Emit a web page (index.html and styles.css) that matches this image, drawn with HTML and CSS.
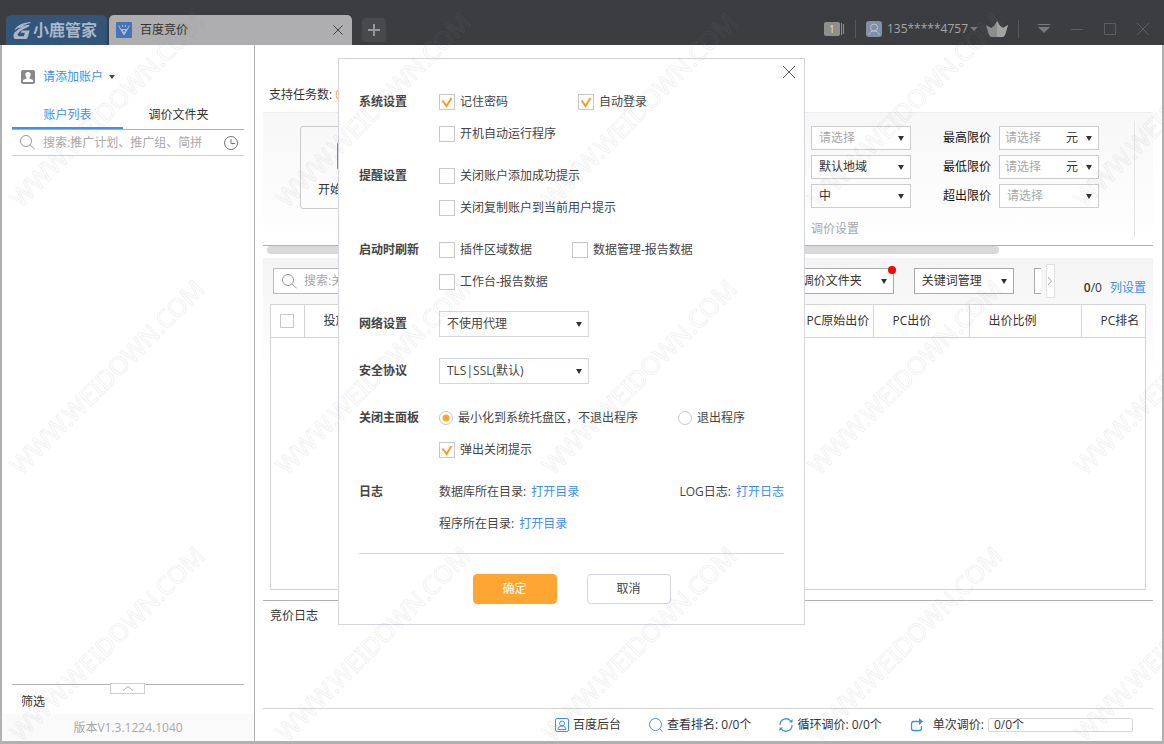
FILE: index.html
```html
<!DOCTYPE html>
<html lang="zh-CN">
<head>
<meta charset="utf-8">
<title>小鹿管家</title>
<link rel="stylesheet" href="styles.css">
</head>
<body>
<div class="app">
  <header class="titlebar">
    <div class="brand">
      <svg class="brand-mark" viewBox="0 0 18 18" aria-hidden="true"><path d="M18 0C9 1 3 4 1 9c2-2 5-3 8-3.500C4 8 0 11 0 15c0 2 1 3 3 3h9c2 0 3-1 3.500-3L17 9H9l-1.500 2.500H12L11 15H6c-2 0-2-2-1-3 2-3 6-5 11-7l1-2c-3 0-5 1-8 2 3-3 6-3 9-4z"/></svg>
      <span>小鹿管家</span>
    </div>
    <div class="tab">
      <svg class="tab-mark" viewBox="0 0 16 16" aria-hidden="true"><rect width="16" height="16" rx="1" fill="#4673b5"/><path d="M2.500 3.500l5.500 9.500 5.500-9.500M5 7.500h6M6 7.500l2 4M10 7.500l-2 4M6.500 3v2M9.500 3v2" fill="none" stroke="#b5c2d5"/></svg>
      <span class="tab-name">百度竞价</span>
      <button class="icon-button" aria-label="关闭标签"><svg width="10" height="10" viewBox="0 0 10 10"><path d="M0.500 0.500l9 9M9.500 0.500l-9 9" fill="none" stroke="#444"/></svg></button>
    </div>
    <button class="add-tab" aria-label="新标签"><svg width="12" height="12" viewBox="0 0 12 12"><path d="M6 0v12M0 6h12" stroke="#96979a" stroke-width="2"/></svg></button>
    <div class="window-tools">
      <svg class="badge-card" width="20" height="14" viewBox="0 0 20 14" aria-label="1"><rect width="16" height="14" rx="2" fill="#8f8f8d"/><path d="M17.500 1v12M19.500 2v10" stroke="#8f8f8d"/><text x="5" y="11" class="badge-number">1</text></svg>
      <i class="bar"></i>
      <svg class="user-mark" width="16" height="16" viewBox="0 0 16 16" aria-hidden="true"><rect width="16" height="16" rx="3" fill="#8190a8"/><g fill="none" stroke="#b9c0cb"><circle cx="8" cy="6.500" r="3.500"/><path d="M2.500 14c1-3 3-4 5.500-4s4.500 1 5.500 4"/></g></svg>
      <button class="user-name">135*****4757<svg width="8" height="4" viewBox="0 0 8 4"><path d="M0 0h8l-4 4z" fill="#77787a"/></svg></button>
      <svg class="crown" width="22" height="16" viewBox="0 0 22 16" aria-hidden="true"><path d="M0 4l5 3 3-2 3-5 3 5 3 2 5-3-3 10-2 2H5l-2-2z" fill="#8d8d8d"/><path d="M11 0l3 5 3 2 5-3-3 10-2 2h-6z" fill="#a3a3a3"/></svg>
      <i class="bar"></i>
      <button class="icon-button menu" aria-label="菜单"><svg width="12" height="10" viewBox="0 0 12 10"><path d="M0 0.500h12" stroke="#77787a"/><path d="M0 3h12l-6 6z" fill="#77787a"/></svg></button>
      <button class="icon-button" aria-label="最小化"><svg width="12" height="12" viewBox="0 0 12 12"><path d="M0 6.500h12" stroke="#5d5e61"/></svg></button>
      <button class="icon-button" aria-label="最大化"><svg width="12" height="12" viewBox="0 0 12 12"><path d="M0.500 0.500h11v11h-11z" fill="none" stroke="#5d5e61"/></svg></button>
      <button class="icon-button" aria-label="关闭"><svg width="12" height="12" viewBox="0 0 12 12"><path d="M0 0l12 12M12 0L0 12" stroke="#5d5e61"/></svg></button>
    </div>
  </header>

  <div class="workspace">
    <aside class="sidebar">
      <button class="account">
        <svg width="14" height="14" viewBox="0 0 14 14" aria-hidden="true"><rect width="14" height="14" rx="2" fill="#8a8a8a"/><path d="M7 2c2 0 3 1.500 2.500 3.500L8.500 7.500v1L12 10v2H2v-2l3.500-1.500v-1l-1-2C4 3.500 5 2 7 2z" fill="#fff"/></svg>
        <span>请添加账户</span>
        <i class="caret"></i>
      </button>
      <nav class="side-tabs">
        <button class="side-tab active">账户列表</button>
        <button class="side-tab">调价文件夹</button>
      </nav>
      <div class="side-search">
        <svg width="15" height="15" viewBox="0 0 15 15" aria-hidden="true"><g fill="none" stroke="#999"><circle cx="6" cy="6" r="5.500"/><path d="M10 10l4.500 4"/></g></svg>
        <input type="text" aria-label="搜索账户" placeholder="搜索:推广计划、推广组、简拼">
        <svg width="14" height="14" viewBox="0 0 14 14" aria-hidden="true"><g fill="none" stroke="#777"><circle cx="7" cy="7" r="6.500"/><path d="M7 3v4.500h4"/></g></svg>
      </div>
      <div class="side-list"></div>
      <div class="filter">
        <button class="collapse" aria-label="展开筛选"><svg width="10" height="5" viewBox="0 0 10 5"><path d="M0 4.500l5-4 5 4" fill="none" stroke="#aaa"/></svg></button>
        <span>筛选</span>
      </div>
      <div class="version">版本V1.3.1224.1040</div>
    </aside>

    <main class="content">
      <p class="tasks">支持任务数: <span class="count">0</span></p>
      <section class="toolbar">
        <button class="start"><svg width="22" height="26" viewBox="0 0 22 26" aria-hidden="true"><path d="M0 0l22 13L0 26z" fill="#3fc116"/></svg><span>开始竞价</span></button>
        <div class="price-group">
          <div class="price-fields">
            <select class="box muted" aria-label="设备"><option>请选择</option></select>
            <label for="max">最高限价</label>
            <div class="box unit"><input id="max" type="text" placeholder="请选择"><select aria-label="最高限价单位"><option>元</option></select></div>
            <select class="box" aria-label="地域"><option>默认地域</option></select>
            <label for="min">最低限价</label>
            <div class="box unit"><input id="min" type="text" placeholder="请选择"><select aria-label="最低限价单位"><option>元</option></select></div>
            <select class="box" aria-label="速度"><option>中</option></select>
            <label for="over">超出限价</label>
            <select id="over" class="box muted"><option>请选择</option></select>
          </div>
          <p class="group-name">调价设置</p>
        </div>
      </section>
      <div class="scroller"><div class="thumb"></div></div>
      <section class="keywords">
        <div class="keyword-tools">
          <div class="keyword-search">
            <svg width="15" height="15" viewBox="0 0 15 15" aria-hidden="true"><g fill="none" stroke="#999"><circle cx="6" cy="6" r="5.500"/><path d="M10 10l4.500 4"/></g></svg>
            <input type="text" aria-label="搜索关键词" placeholder="搜索:关键词">
          </div>
          <div class="dotted"><select class="box dark" aria-label="调价文件夹"><option>调价文件夹</option></select><i class="dot"></i></div>
          <select class="box dark" aria-label="关键词管理"><option>关键词管理</option></select>
          <div class="cut"></div>
          <button class="next" aria-label="更多"><svg width="4" height="8" viewBox="0 0 4 8"><path d="M0 0l3.500 4L0 8" fill="none" stroke="#aaa"/></svg></button>
          <span class="total"><b>0</b>/0</span>
          <a class="columns" href="#">列设置</a>
        </div>
        <div class="table-frame">
          <table>
            <thead>
              <tr><th class="c-check"><input type="checkbox" aria-label="全选"></th><th>投放</th><th class="c-origin">PC原始出价</th><th class="c-price">PC出价</th><th class="c-ratio">出价比例</th><th class="c-rank">PC排名</th></tr>
            </thead>
          </table>
        </div>
      </section>
      <section class="log"><h2>竞价日志</h2></section>
      <footer class="status">
        <a class="status-item" href="#"><svg width="14" height="14" viewBox="0 0 14 14" aria-hidden="true"><g fill="none" stroke="#3f8fe8"><rect x="0.500" y="0.500" width="13" height="13" rx="1.500"/><circle cx="7" cy="5.500" r="2.500"/><path d="M3 11.500c0-2 1.500-3.500 4-3.500s4 1.500 4 3.500z"/></g></svg>百度后台</a>
        <span class="status-item"><svg width="14" height="14" viewBox="0 0 14 14" aria-hidden="true"><g fill="none" stroke="#3f8fe8"><circle cx="6.500" cy="6.500" r="6"/><path d="M11 11l2.500 3"/></g></svg>查看排名: 0/0个</span>
        <span class="status-item"><svg width="14" height="14" viewBox="0 0 14 14" aria-hidden="true"><g fill="none" stroke="#3f8fe8" stroke-width="1.300"><path d="M1 7a6 6 0 0 1 11-3.500M13 7a6 6 0 0 1-11 3.500"/></g><path d="M10 4.500h3.500V1zM4 9.500H0.500V13z" fill="#3f8fe8"/></svg>循环调价: 0/0个</span>
        <span class="status-item once"><svg width="14" height="14" viewBox="0 0 14 14" aria-hidden="true"><path d="M10 3.500H3.500Q1.500 3.500 1.500 6v4.500q0 2 2 2h6q2 0 2-2V8" fill="none" stroke="#3f8fe8" stroke-width="1.300"/><path d="M9 0l4 3.500L9 7z" fill="#3f8fe8"/></svg><label for="once">单次调价:</label><input id="once" type="text" value="0/0个" readonly></span>
      </footer>
    </main>
  </div>

  <form class="dialog" role="dialog" aria-label="系统设置">
    <button type="button" class="dialog-close" aria-label="关闭"><svg width="12" height="12" viewBox="0 0 12 12"><path d="M0 0l12 12M12 0L0 12" stroke="#555"/></svg></button>
    <section class="group">
      <h3>系统设置</h3>
      <div class="rows">
        <div class="row"><label class="opt w-login"><input type="checkbox" checked>记住密码</label><label class="opt"><input type="checkbox" checked>自动登录</label></div>
        <div class="row"><label class="opt"><input type="checkbox">开机自动运行程序</label></div>
      </div>
    </section>
    <section class="group">
      <h3>提醒设置</h3>
      <div class="rows">
        <div class="row"><label class="opt"><input type="checkbox">关闭账户添加成功提示</label></div>
        <div class="row"><label class="opt"><input type="checkbox">关闭复制账户到当前用户提示</label></div>
      </div>
    </section>
    <section class="group">
      <h3>启动时刷新</h3>
      <div class="rows">
        <div class="row"><label class="opt w-refresh"><input type="checkbox">插件区域数据</label><label class="opt"><input type="checkbox">数据管理-报告数据</label></div>
        <div class="row"><label class="opt"><input type="checkbox">工作台-报告数据</label></div>
      </div>
    </section>
    <section class="group spaced">
      <h3><label for="proxy">网络设置</label></h3>
      <div class="row"><select id="proxy" class="box wide"><option>不使用代理</option></select></div>
    </section>
    <section class="group spaced">
      <h3><label for="tls">安全协议</label></h3>
      <div class="row"><select id="tls" class="box wide"><option>TLS|SSL(默认)</option></select></div>
    </section>
    <section class="group">
      <h3>关闭主面板</h3>
      <div class="rows">
        <div class="row split"><label class="opt"><input type="radio" name="close" checked>最小化到系统托盘区，不退出程序</label><label class="opt"><input type="radio" name="close">退出程序</label></div>
        <div class="row"><label class="opt"><input type="checkbox" checked>弹出关闭提示</label></div>
      </div>
    </section>
    <section class="group">
      <h3>日志</h3>
      <div class="rows">
        <div class="row split"><span>数据库所在目录: <a href="#">打开目录</a></span><span>LOG日志: <a href="#">打开日志</a></span></div>
        <div class="row"><span>程序所在目录: <a href="#">打开目录</a></span></div>
      </div>
    </section>
    <div class="actions"><button type="button" class="primary">确定</button><button type="button">取消</button></div>
  </form>

  <svg class="watermark" aria-hidden="true">
    <defs><pattern id="mark" width="266" height="267" patternUnits="userSpaceOnUse"><text transform="translate(21 209) rotate(-45)">WWW.WEIDOWN.COM</text></pattern></defs>
    <rect width="100%" height="100%" fill="url(#mark)"/>
  </svg>
</div>
</body>
</html>
```

FILE: styles.css
```css
* { box-sizing: border-box; }

body {
  margin: 0;
  font: 12px/16px "Open Sans", "Noto Sans CJK SC", sans-serif;
  color: #333;
}

button, input, select {
  margin: 0;
  padding: 0;
  border: 0;
  background: none;
  font: inherit;
  color: inherit;
}

input::placeholder { color: #a8a8a8; opacity: 1; }
a { color: #3d8ef2; text-decoration: none; }
p, h2, h3 { margin: 0; font-size: 12px; font-weight: 400; }
svg { display: block; flex: none; }

.app {
  position: relative;
  display: flex;
  flex-direction: column;
  min-height: 100vh;
}

/* Title bar */
.titlebar {
  display: flex;
  align-items: flex-end;
  height: 45px;
  padding: 0 9px 0 6px;
  background: #3c3d41;
}

.brand {
  display: flex;
  align-items: center;
  gap: 2px;
  width: 101px;
  height: 30px;
  padding-left: 7px;
  border-radius: 5px 5px 0 0;
  background: #34557a;
  color: #a9b8c8;
  font-size: 16px;
  font-weight: 700;
}

.brand-mark { width: 18px; height: 17px; fill: #a9b8c8; }

.tab {
  display: flex;
  align-items: center;
  gap: 8px;
  width: 243px;
  height: 30px;
  margin-left: 2px;
  padding: 0 8px 0 7px;
  border-radius: 5px 5px 0 0;
  background: #aeaeb0;
}

.tab-mark { width: 16px; height: 16px; }
.tab-name { flex: 1; }

.icon-button {
  display: grid;
  place-items: center;
  width: 12px;
  height: 16px;
}

.add-tab {
  display: grid;
  place-items: center;
  width: 24px;
  height: 24px;
  margin: 0 0 3px 10px;
  border-radius: 4px;
  background: #48494c;
}

.window-tools {
  display: flex;
  align-items: center;
  gap: 21px;
  height: 32px;
  margin-left: auto;
  padding-right: 6px;
}

.badge-number { font-size: 10px; fill: #ddd; }
.badge-card { margin-right: -10px; }
.bar { width: 1px; height: 18px; background: #57585b; }
.user-mark { margin: 0 -16px 0 -11px; }
.crown { margin: 0 -11px 0 -13px; }

.user-name {
  display: flex;
  align-items: center;
  gap: 2px;
  color: #a5a6a8;
}

.menu { margin-left: -2px; }

/* Frame */
.workspace {
  flex: 1;
  display: flex;
  border: solid #b1b1b1;
  border-width: 0 2px 3px;
  background: #fff;
}

/* Sidebar */
.sidebar {
  display: flex;
  flex-direction: column;
  width: 253px;
  border-right: 1px solid #b1b1b1;
}

.account {
  display: flex;
  align-items: center;
  gap: 8px;
  margin: 24px 0 0 19px;
  color: #3d8ef2;
}

.caret {
  margin-left: -2px;
  border: solid transparent;
  border-width: 4px 3px 0;
  border-top-color: #444;
}

.side-tabs {
  display: grid;
  grid-template-columns: 1fr 1fr;
  margin: 17px 10px 0;
  padding-right: 10px;
  border-bottom: 1px solid #b1b1b1;
}

.side-tab {
  height: 27px;
  border-bottom: 2px solid transparent;
}

.side-tab.active { border-color: #3d8ef2; color: #3d8ef2; }

.side-search {
  display: flex;
  align-items: center;
  gap: 8px;
  height: 26px;
  margin: 0 10px;
  padding: 0 6px 0 8px;
  border-bottom: 1px solid #d0d0d0;
}

.side-search input { flex: 1; min-width: 0; }
.side-list { flex: 1; }

.filter {
  position: relative;
  margin: 0 10px;
  padding: 9px 9px 4px;
  border-top: 1px solid #b1b1b1;
}

.collapse {
  position: absolute;
  top: -2px;
  left: 98px;
  display: grid;
  place-items: center;
  width: 35px;
  height: 11px;
  border: 1px solid #d0d0d0;
  background: #fff;
}

.version {
  height: 27px;
  background: #fafafa;
  color: #a8a8a8;
  line-height: 27px;
  text-align: center;
}

/* Boxed controls */
.box {
  width: 100px;
  height: 24px;
  padding: 0 7px;
  border: 1px solid #ccc;
  background-color: #fff;
}

select {
  appearance: none;
  background: url("data:image/svg+xml,%3Csvg xmlns='http://www.w3.org/2000/svg' width='6' height='5'%3E%3Cpath d='M0 0h6L3 5z' fill='%23333'/%3E%3C/svg%3E") no-repeat right 6px center;
}

.muted { color: #a8a8a8; }
.dark { height: 26px; border-color: #aaa; }
.wide { width: 150px; height: 26px; border-color: #d3d6dc; }
.unit { display: flex; padding: 0 0 0 5px; }
.unit input { flex: 1; min-width: 0; }
.unit select { width: 32px; }

/* Main area */
.content {
  flex: 1;
  display: flex;
  flex-direction: column;
  min-width: 0;
  padding: 0 9px 0 8px;
}

.tasks { padding: 42px 6px 9px; }
.count { color: #ffa632; }

.toolbar {
  display: flex;
  justify-content: space-between;
  align-items: flex-start;
  padding: 8px 18px 8px 37px;
  border-top: 1px solid #ececec;
  border-bottom: 1px solid #b1b1b1;
  background: linear-gradient(#f7f7f7, #fff);
}

.start {
  display: flex;
  flex-direction: column;
  align-items: center;
  justify-content: space-between;
  width: 84px;
  height: 83px;
  margin-top: 5px;
  padding: 16px 0 10px;
  border: 1px solid #ccc;
  border-radius: 3px;
}

.start svg { margin-left: 12px; }

.price-group {
  padding: 5px 35px 0 0;
  border-right: 1px solid #e6e6e6;
}

.price-fields {
  display: grid;
  grid-template-columns: 100px 72px 100px;
  align-items: center;
  column-gap: 8px;
  row-gap: 5px;
}

.price-fields label { padding-left: 24px; color: #111; }
.group-name { padding-top: 13px; color: #a8a8a8; }

.scroller { height: 12px; padding: 0 4px; }
.thumb { width: 83%; height: 8px; border-radius: 4px; background: #d9d9d9; }

.keywords {
  flex: 1;
  display: flex;
  flex-direction: column;
  padding: 6px 7px 10px;
  border-bottom: 1px solid #b1b1b1;
  background: linear-gradient(#f4f4f4, #fff 120px);
}

.keyword-tools {
  display: flex;
  align-items: center;
  height: 34px;
  padding-left: 3px;
}

.keyword-search {
  display: flex;
  align-items: center;
  gap: 7px;
  width: 180px;
  height: 26px;
  margin-right: auto;
  padding: 0 8px;
  border: 1px solid #bbb;
  background: #fff;
}

.keyword-search input { flex: 1; min-width: 0; }
.dotted { position: relative; margin-right: 20px; }

.dot {
  position: absolute;
  top: -2px;
  right: -2px;
  width: 8px;
  height: 8px;
  border-radius: 50%;
  background: #f00;
}

.cut {
  width: 7px;
  height: 26px;
  margin: 0 5px 0 20px;
  border: solid #aaa;
  border-width: 1px 0 1px 1px;
  background: #fff;
}

.next {
  display: grid;
  place-items: center;
  width: 9px;
  height: 34px;
  margin-right: 29px;
  border: 1px solid #e2e2e2;
  background: #fff;
}

.total, .columns { padding-top: 14px; }
.total b { font-weight: 600; }
.columns { margin-left: 8px; }

.table-frame {
  flex: 1;
  margin-top: 6px;
  border: 1px solid #d5d5d5;
  background: #fff;
}

table {
  width: 100%;
  border-collapse: collapse;
  table-layout: fixed;
}

th {
  height: 32px;
  padding: 0 0 0 19px;
  border-right: 1px solid #d5d5d5;
  border-bottom: 1px solid #d5d5d5;
  font-weight: 400;
  text-align: left;
  white-space: nowrap;
}

th:last-child { border-right: 0; }
.c-check { width: 33px; padding: 0 0 0 9px; }
.c-origin { width: 86px; }
.c-price { width: 96px; }
.c-ratio { width: 112px; }
.c-rank { width: 64px; }

.log { height: 108px; padding: 7px; border-bottom: 1px solid #d5d5d5; }

.status {
  display: flex;
  align-items: center;
  justify-content: flex-end;
  gap: 28px;
  height: 32px;
  padding-right: 20px;
}

.status-item { display: flex; align-items: center; gap: 4px; color: #333; }
.once label { margin-left: 5px; }

.once input {
  width: 145px;
  height: 14px;
  padding: 0 5px;
  border: 1px solid #d8d8d8;
  border-radius: 2px;
}

/* Check boxes and radios */
input[type="checkbox"], input[type="radio"] {
  appearance: none;
  display: block;
  flex: none;
  width: 16px;
  height: 16px;
  border: 1px solid #c6c8cc;
  background: #fff center no-repeat;
}

th input[type="checkbox"] { width: 14px; height: 14px; }

input[type="checkbox"]:checked {
  background-image: url("data:image/svg+xml,%3Csvg xmlns='http://www.w3.org/2000/svg' width='12' height='12'%3E%3Cpath d='M1.500 4.500l4 5.500 5-8' fill='none' stroke='%23ff9a1f' stroke-width='2'/%3E%3C/svg%3E");
}

input[type="radio"] { width: 14px; height: 14px; border-radius: 50%; }

input[type="radio"]:checked {
  background-image: radial-gradient(circle, #ffa632 3px, transparent 4px);
}

/* Settings dialog */
.dialog {
  position: absolute;
  top: 58px;
  left: 338px;
  width: 467px;
  padding: 27px 20px 20px;
  border: 1px solid #d3d6dc;
  background: #fff;
  color: #444;
}

.dialog-close { position: absolute; top: 7px; right: 9px; }

.group {
  display: grid;
  grid-template-columns: 80px 1fr;
  margin-bottom: 10px;
}

.group h3 { font-weight: 700; line-height: 32px; }
.group.spaced { margin-bottom: 15px; }
.row { display: flex; align-items: center; height: 32px; }
.row a { margin-left: 2px; }
.split { justify-content: space-between; }
.opt { display: flex; align-items: center; gap: 5px; }
.split .opt:last-child { margin-right: 39px; }
.w-login { width: 139px; }
.w-refresh { width: 133px; }

.actions {
  display: flex;
  justify-content: center;
  gap: 30px;
  margin-top: 13px;
  padding-top: 20px;
  border-top: 1px solid #d8d8d8;
}

.actions button {
  width: 84px;
  height: 30px;
  border: 1px solid #d3d6dc;
  border-radius: 4px;
}

.actions .primary { border-color: #ffa632; background: #ffa632; color: #fff; }

/* Watermark overlay */
.watermark {
  position: absolute;
  top: 0;
  left: 0;
  width: 100%;
  height: 100%;
  pointer-events: none;
}

.watermark text {
  font: 25px "Noto Sans", sans-serif;
  fill: none;
  stroke: rgba(128, 128, 128, 0.11);
}
```
